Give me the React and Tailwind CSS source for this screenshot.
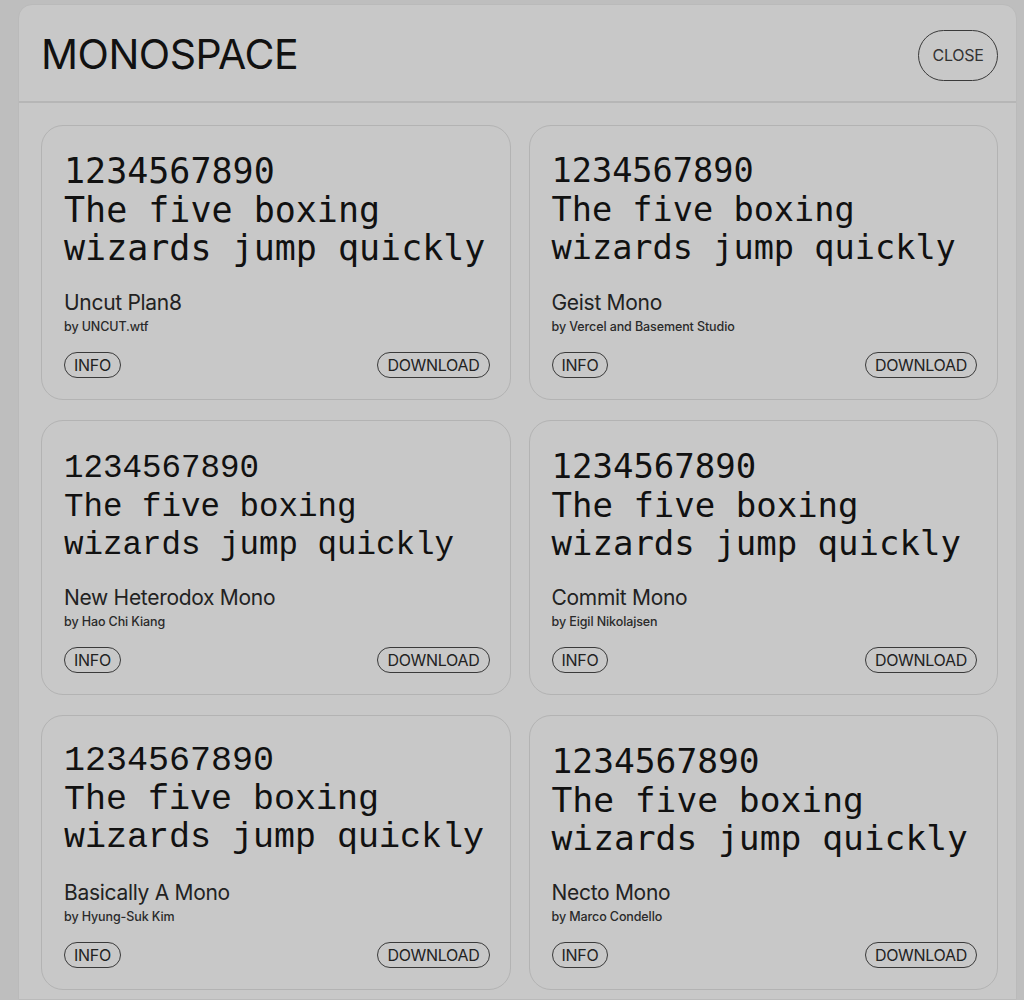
const fonts = [
  { name: 'Uncut Plan8', by: 'by UNCUT.wtf', family: 'font-["DejaVu_Sans_Mono",monospace]', size: 'text-[35px]', shift: 'mt-0' },
  { name: 'Geist Mono', by: 'by Vercel and Basement Studio', family: 'font-["DejaVu_Sans_Mono",monospace]', size: 'text-[33.6px]', shift: 'mt-0' },
  { name: 'New Heterodox Mono', by: 'by Hao Chi Kiang', family: 'font-["Liberation_Mono",monospace]', size: 'text-[32.5px]', shift: 'mt-[3px] -mb-[3px]' },
  { name: 'Commit Mono', by: 'by Eigil Nikolajsen', family: 'font-["DejaVu_Sans_Mono",monospace]', size: 'text-[34px]', shift: 'mt-0' },
  { name: 'Basically A Mono', by: 'by Hyung-Suk Kim', family: 'font-["Liberation_Mono",monospace]', size: 'text-[35px]', shift: 'mt-0' },
  { name: 'Necto Mono', by: 'by Marco Condello', family: 'font-["DejaVu_Sans_Mono",monospace]', size: 'text-[34.6px]', shift: 'mt-0' },
]

function Pill({ children }) {
  return (
    <button className="h-[26px] px-[9px] rounded-full border-[1.5px] border-[#3a3a3a] text-[16px] leading-none text-[#222] tracking-[-0.3px] flex items-center">
      {children}
    </button>
  )
}

function FontCard({ font }) {
  return (
    <div className="h-[275px] rounded-[22px] border border-[#b3b3b3] pl-[22px] pr-[20px] pt-[26px] pb-[21px] flex flex-col">
      <div className={`${font.family} ${font.size} ${font.shift} leading-[38.6px] text-[#111] whitespace-nowrap`}>
        <div>1234567890</div>
        <div>The five boxing</div>
        <div>wizards jump quickly</div>
      </div>
      <div className="mt-[23px] text-[21px] leading-[24px] text-[#222] tracking-[-0.3px]">{font.name}</div>
      <div className="mt-[4px] text-[12.5px] leading-[15px] font-medium text-[#2a2a2a] tracking-[-0.1px]">{font.by}</div>
      <div className="mt-auto flex justify-between items-center">
        <Pill>INFO</Pill>
        <Pill>DOWNLOAD</Pill>
      </div>
    </div>
  )
}

export default function App() {
  return (
    <div className="w-[1024px] h-[1000px] overflow-hidden bg-[#bebebe] pt-[4px] pl-[18px] pr-[7px] font-['Inter',sans-serif]">
      <div className="h-full bg-[#c8c8c8] rounded-t-[14px] border border-[#bababa]">
        <header className="h-[98px] flex items-center justify-between pl-[22px] pr-[18px] border-b-2 border-[#b6b6b6]">
          <h1 className="text-[41px] leading-none text-[#111] tracking-[-0.5px] pt-[2px]">MONOSPACE</h1>
          <button className="w-[80px] h-[51px] mt-[4px] rounded-full border-[1.5px] border-[#3a3a3a] text-[16px] text-[#333] tracking-[-0.3px]">
            CLOSE
          </button>
        </header>
        <main className="grid grid-cols-2 gap-x-[18px] gap-y-[20px] pl-[22px] pr-[18px] pt-[22px]">
          {fonts.map((f) => (
            <FontCard key={f.name} font={f} />
          ))}
        </main>
      </div>
    </div>
  )
}
